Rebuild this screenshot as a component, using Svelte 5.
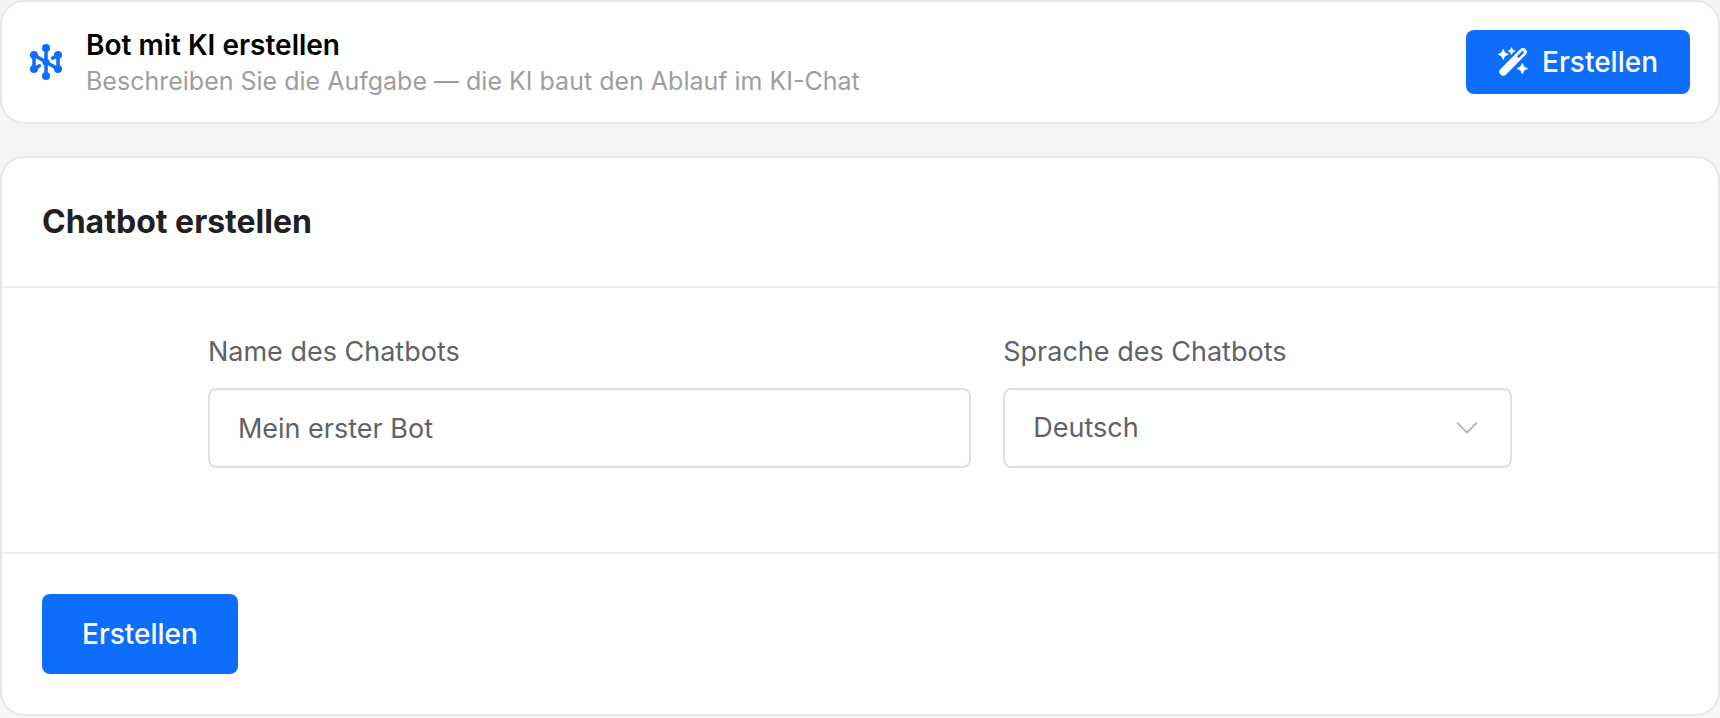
<script>
  const languages = ['Deutsch', 'English', 'Français', 'Español'];
  let name = $state('Mein erster Bot');
  let language = $state('Deutsch');
</script>

<main class="page">
  <section class="card banner">
    <svg class="hub" viewBox="0 0 32 36" aria-hidden="true">
      <g stroke="currentColor" stroke-width="3.5" stroke-linecap="round" fill="none">
        <path d="M16 4V32M4 11V25M28 11V25M4 11L28 25" />
        <path d="M4 25L9.5 21.8M28 11L22.5 14.2" />
      </g>
      <g fill="currentColor">
        <circle cx="16" cy="4" r="4" />
        <circle cx="16" cy="32" r="4" />
        <circle cx="4" cy="11" r="4" />
        <circle cx="4" cy="25" r="4" />
        <circle cx="28" cy="11" r="4" />
        <circle cx="28" cy="25" r="4" />
        <circle cx="16" cy="18" r="3.6" />
      </g>
    </svg>
    <div class="intro">
      <h2>Bot mit KI erstellen</h2>
      <p>Beschreiben Sie die Aufgabe — die KI baut den Ablauf im KI-Chat</p>
    </div>
    <button class="btn compact" type="button">
      <svg class="wand" viewBox="0 0 30 30" aria-hidden="true">
        <path d="M5.3 24.7L24.9 5.1" stroke="currentColor" stroke-width="7.8" stroke-linecap="round" />
        <path d="M20.4 9.6L24.7 5.3" stroke="#0d6efd" stroke-width="2.4" stroke-linecap="round" />
        <g fill="currentColor" stroke="currentColor" stroke-width="0.8" stroke-linejoin="round">
          <path d="M5.2 2.4L6.8 5.8L10.2 7.4L6.8 9L5.2 12.4L3.6 9L0.4 7.4L3.6 5.8Z" />
          <path d="M13.5 0.7L14.6 3L16.9 4.1L14.6 5.2L13.5 7.5L12.4 5.2L10.1 4.1L12.4 3Z" />
          <path d="M24.3 16.4L26 20L29.5 21.6L26 23.2L24.3 26.8L22.6 23.2L19.1 21.6L22.6 20Z" />
        </g>
      </svg>
      <span>Erstellen</span>
    </button>
  </section>

  <form class="card" onsubmit={(e) => e.preventDefault()}>
    <header><h1>Chatbot erstellen</h1></header>
    <div class="fields">
      <div class="field">
        <label for="bot-name">Name des Chatbots</label>
        <input id="bot-name" type="text" bind:value={name} />
      </div>
      <div class="field">
        <label for="bot-language">Sprache des Chatbots</label>
        <div class="select">
          <select id="bot-language" bind:value={language}>
            {#each languages as item}
              <option value={item}>{item}</option>
            {/each}
          </select>
          <svg class="chevron" viewBox="0 0 22 12" aria-hidden="true">
            <path d="M1.5 1L11 10.5L20.5 1" fill="none" stroke="#a8abb2" stroke-width="1.6" stroke-linecap="round" />
          </svg>
        </div>
      </div>
    </div>
    <footer><button class="btn" type="submit">Erstellen</button></footer>
  </form>
</main>

<style>
  :global(body) {
    margin: 0;
    background: #f5f5f5;
  }
  .page {
    display: flex;
    flex-direction: column;
    gap: 32px;
    font-family: Inter, 'Liberation Sans', sans-serif;
    font-size: 27px;
    line-height: 36px;
  }
  .page * {
    box-sizing: border-box;
  }
  h1, h2, p {
    margin: 0;
  }
  .card {
    border: 2px solid #e6e6ee;
    border-radius: 24px;
    background: #fff;
  }
  .banner {
    display: flex;
    align-items: center;
    gap: 24px;
    padding: 23px 28px;
  }
  .hub {
    width: 32px;
    height: 36px;
    flex: none;
    color: #0d6efd;
  }
  .intro {
    flex: 1;
    min-width: 0;
    padding-top: 2px;
  }
  h2 {
    font-size: 28px;
    line-height: 36px;
    font-weight: 600;
    color: #000;
  }
  p {
    font-size: 25px;
    color: #9e9e9e;
  }
  h1 {
    font-size: 32px;
    line-height: 48px;
    font-weight: 700;
    color: #212121;
  }
  .btn {
    display: inline-flex;
    align-items: center;
    justify-content: center;
    gap: 14px;
    height: 80px;
    padding: 0 40px;
    border: 0;
    border-radius: 8px;
    background: #0d6efd;
    color: #fff;
    font: inherit;
    font-size: 28px;
    font-weight: 500;
  }
  .compact {
    height: 64px;
    padding: 0 32px;
  }
  .wand {
    width: 30px;
    height: 30px;
    flex: none;
    fill: none;
  }
  header {
    padding: 40px;
    border-bottom: 2px solid #ebeef2;
  }
  .fields {
    display: grid;
    grid-template-columns: 3fr 2fr;
    gap: 32px;
    padding: 44px 12% 84px;
  }
  .field {
    min-width: 0;
  }
  label {
    display: block;
    padding-top: 2px;
    margin-bottom: 18px;
    color: #606266;
  }
  input, select {
    display: block;
    width: 100%;
    height: 80px;
    padding: 0 28px;
    border: 2px solid #dcdfe6;
    border-radius: 8px;
    background: #fff;
    color: #606266;
    font: inherit;
    appearance: none;
  }
  .select {
    position: relative;
  }
  .chevron {
    position: absolute;
    right: 34px;
    top: 50%;
    width: 22px;
    height: 12px;
    transform: translateY(-50%);
    pointer-events: none;
  }
  footer {
    padding: 40px;
    border-top: 2px solid #ebeef2;
  }
  footer .btn {
    display: flex;
  }
</style>
